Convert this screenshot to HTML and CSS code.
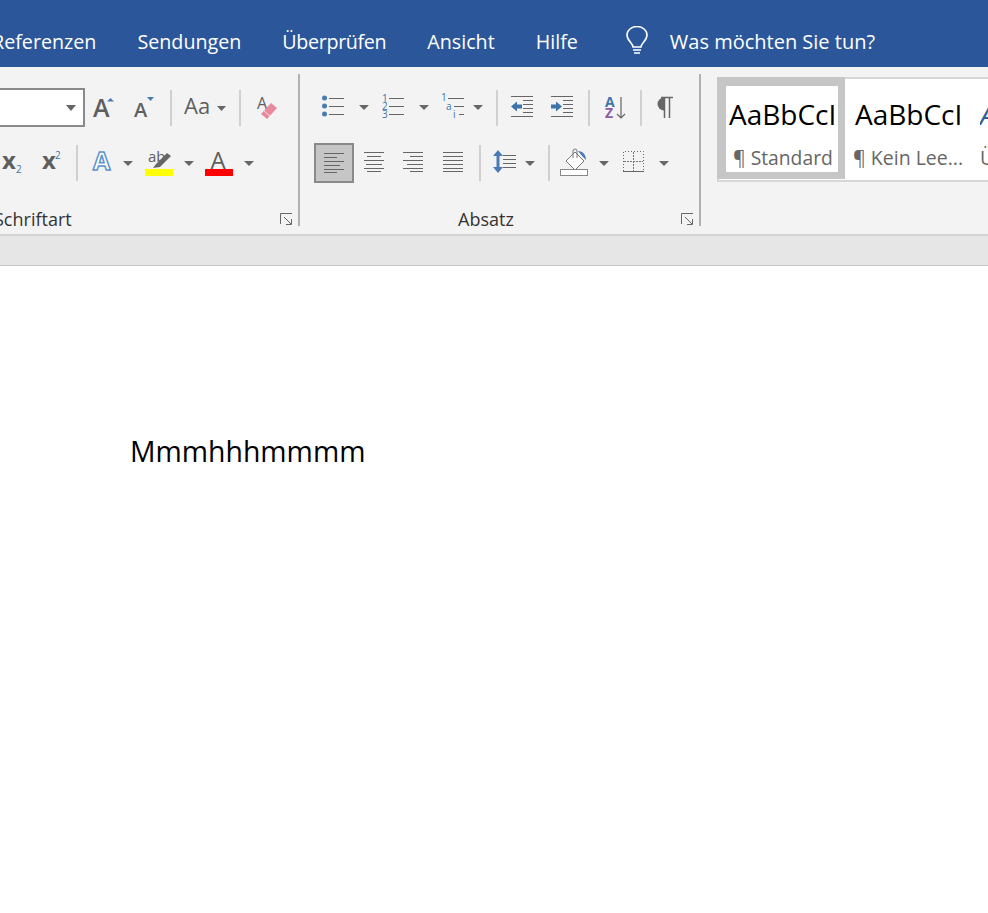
FILE: index.html
```html
<!DOCTYPE html>
<html lang="de">
<head>
    <meta charset="UTF-8">
    <meta name="viewport" content="width=device-width, initial-scale=1.0">
    <title>Dokument - Word</title>
    <link rel="stylesheet" href="styles.css">
</head>
<body>
    <div class="titlebar">
        <span class="tab tab-first">Referenzen</span>
        <span class="tab">Sendungen</span>
        <span class="tab tab-tight">Überprüfen</span>
        <span class="tab">Ansicht</span>
        <span class="tab">Hilfe</span>
        <svg class="bulb" width="24" height="30" viewBox="0 0 24 30" fill="none" stroke="#fff" stroke-width="1.6">
            <path d="M8 21c0-4-6-6-6-12a10 8.500 0 0 1 20 0c0 6-6 8-6 12z"/>
            <path d="M8 24h8M9 27h6"/>
        </svg>
        <span class="tell">Was möchten Sie tun?</span>
    </div>

    <div class="ribbon">
        <div class="group group-font">
            <div class="tools row-one-font">
                <div class="combo"><svg width="10" height="6"><path d="M0 0h10L5 6z" fill="#666"/></svg></div>
                <svg width="40" height="40"><text x="8" y="30" class="ic-letter big">A</text><path d="M22 14.500l3.500-3.500 3.500 3.500z" fill="#4a7ab5"/></svg>
                <svg width="40" height="40"><text x="9" y="30" class="ic-letter mid">A</text><path d="M22 10h7l-3.500 4z" fill="#4a7ab5"/></svg>
                <div class="sep sep-a"></div>
                <svg width="56" height="40"><text x="7" y="27" class="ic-letter aa">Aa</text><path d="M40 19h9l-4.500 5z" fill="#666"/></svg>
                <div class="sep sep-b"></div>
                <svg width="40" height="40">
                    <text x="10" y="22" class="ic-letter small">A</text>
                    <path d="M14 27L24 16l6 5-10 11z" fill="#e8899c"/>
                    <path d="M17 24l6 5" stroke="#f8dfe4"/>
                </svg>
            </div>
            <div class="tools row-two-font">
                <svg width="40" height="40"><text x="10" y="27" class="ic-letter script">x</text><text x="24" y="31" class="ic-sub">2</text></svg>
                <svg width="40" height="40"><text x="10" y="27" class="ic-letter script">x</text><text x="23" y="17" class="ic-sub">2</text></svg>
                <div class="sep sep-c"></div>
                <svg width="40" height="40"><text x="11" y="28" class="ic-effect">A</text></svg>
                <svg width="12" height="40"><path d="M1 19h10l-5 5z" fill="#666"/></svg>
                <svg width="50" height="40">
                    <text x="14" y="20" class="ic-letter ab">ab</text>
                    <path d="M19 26l3-4 11-11 4 3-11 11z" fill="#666"/>
                    <rect x="11" y="27" width="28" height="7" fill="#ffff00"/>
                </svg>
                <svg width="10" height="40"><path d="M0 19h10l-5 5z" fill="#666"/></svg>
                <svg width="50" height="40">
                    <text x="16.500" y="27" class="ic-letter color">A</text>
                    <rect x="11" y="27" width="28" height="7" fill="#ff0000"/>
                </svg>
                <svg width="10" height="40"><path d="M0 19h10l-5 5z" fill="#666"/></svg>
            </div>
            <div class="group-label">
                <span class="label-font">Schriftart</span>
                <svg class="launcher" width="13" height="13" fill="none" stroke="#666"><path d="M.5 11V.5H12M4 4l7 7M6 11.500h5.500V6"/></svg>
            </div>
        </div>

        <div class="group group-para">
            <div class="tools">
                <svg width="40" height="40" fill="none">
                    <g fill="#4a7ab5"><circle cx="10.500" cy="11" r="2.500"/><circle cx="10.500" cy="19" r="2.500"/><circle cx="10.500" cy="27" r="2.500"/></g>
                    <path d="M15 11.500h15M15 19.500h15M15 27.500h15" stroke="#666"/>
                </svg>
                <svg width="20" height="40"><path d="M5 18h10l-5 5z" fill="#666"/></svg>
                <svg width="40" height="40" fill="none">
                    <text x="8" y="15" class="ic-num">1</text><text x="8" y="23" class="ic-num">2</text><text x="8" y="31" class="ic-num">3</text>
                    <path d="M15 11.500h15M15 19.500h15M15 27.500h15" stroke="#666"/>
                </svg>
                <svg width="20" height="40"><path d="M5 18h10l-5 5z" fill="#666"/></svg>
                <svg width="36" height="40" fill="none">
                    <text x="7" y="14" class="ic-num">1</text><text x="12" y="23" class="ic-num">a</text><text x="19" y="31" class="ic-num">i</text>
                    <path d="M14 11.500h16M20 19.500h10M25 27.500h5" stroke="#666"/>
                </svg>
                <svg width="17" height="40"><path d="M3 18h10l-5 5z" fill="#666"/></svg>
                <div class="sep sep-d"></div>
                <svg width="40" height="40" fill="none">
                    <path d="M9 9.500h22M21 13.500h10M21 17.500h10M21 21.500h10M21 25.500h10M9 29.500h22" stroke="#666"/>
                    <path d="M9 19.500l6-5v3h5v4h-5v3z" fill="#3f74ab"/>
                </svg>
                <svg width="40" height="40" fill="none">
                    <path d="M9 9.500h22M21 13.500h10M21 17.500h10M21 21.500h10M21 25.500h10M9 29.500h22" stroke="#666"/>
                    <path d="M20 19.500l-6-5v3H9v4h5v3z" fill="#3f74ab"/>
                </svg>
                <div class="sep sep-e"></div>
                <svg width="42" height="40" fill="none">
                    <text x="11" y="20" class="ic-sort sort-a">A</text>
                    <text x="11" y="31" class="ic-sort sort-z">Z</text>
                    <path d="M27 10v21M23 27l4 4 4-4" stroke="#666" stroke-width="1.200"/>
                </svg>
                <div class="sep sep-f"></div>
                <svg width="40" height="40" fill="none">
                    <path d="M18 10.500a6.500 6.500 0 0 0 0 13z" fill="#666"/>
                    <path d="M15 10.500h12M18.500 10v21M23.500 10v21" stroke="#666" stroke-width="1.500"/>
                </svg>
            </div>
            <div class="tools">
                <div class="active-btn">
                    <svg width="20" height="22" fill="none" stroke="#666"><path d="M0 1.500h20M0 5.500h13M0 9.500h20M0 13.500h16M0 17.500h20M0 20.500h13"/></svg>
                </div>
                <svg width="39" height="40" fill="none" stroke="#666"><path d="M10 10.500h20M13 14.500h14M10 18.500h20M12 22.500h16M10 26.500h20M13 29.500h14"/></svg>
                <svg width="40" height="40" fill="none" stroke="#666"><path d="M10 10.500h20M17 14.500h13M10 18.500h20M14 22.500h16M10 26.500h20M17 29.500h13"/></svg>
                <svg width="40" height="40" fill="none" stroke="#666"><path d="M10 10.500h20M10 14.500h20M10 18.500h20M10 22.500h20M10 26.500h20M10 29.500h20"/></svg>
                <div class="sep sep-g"></div>
                <svg width="40" height="40" fill="none">
                    <path d="M13 8l-5 6h10zM13 31l-5-6h10z" fill="#4a7ab5"/>
                    <path d="M13 13v13" stroke="#4a7ab5" stroke-width="3"/>
                    <path d="M18 13.500h13M18 17.500h13M18 21.500h13M18 25.500h13" stroke="#666"/>
                </svg>
                <svg width="10" height="40"><path d="M0 19h10l-5 5z" fill="#666"/></svg>
                <div class="sep sep-h"></div>
                <svg width="44" height="40" fill="none">
                    <path d="M23 10l9 9-9 9-9-9z" stroke="#777" fill="#fff"/>
                    <path d="M21 16V9a2 2 0 0 1 4 0v7" stroke="#777"/>
                    <path d="M26 9c5 0 8 4 8 9l-3-3z" fill="#4a7ab5"/>
                    <rect x="8.500" y="27.500" width="27" height="6" stroke="#888" fill="#fff"/>
                </svg>
                <svg width="16" height="40"><path d="M3 19h10l-5 5z" fill="#666"/></svg>
                <svg width="44" height="40" fill="none">
                    <path d="M11.500 29V9.500h20V29" stroke="#666" stroke-dasharray="1 2"/>
                    <path d="M21.500 10v19M12 19.500h19" stroke="#777" stroke-dasharray="2 1"/>
                    <path d="M11 29.500h21" stroke="#666"/>
                </svg>
                <svg width="16" height="40"><path d="M3 19h10l-5 5z" fill="#666"/></svg>
            </div>
            <div class="group-label">
                <span class="label-para">Absatz</span>
                <svg class="launcher" width="13" height="13" fill="none" stroke="#666"><path d="M.5 11V.5H12M4 4l7 7M6 11.500h5.500V6"/></svg>
            </div>
        </div>

        <div class="group-styles">
            <div class="gallery">
                <div class="style-item style-active">
                    <div class="style-sample">AaBbCcI</div>
                    <div class="style-name">¶ Standard</div>
                </div>
                <div class="style-item style-second">
                    <div class="style-sample">AaBbCcI</div>
                    <div class="style-name">¶ Kein Lee...</div>
                </div>
                <div class="style-item style-third">
                    <div class="style-sample heading">A</div>
                    <div class="style-name">Ü</div>
                </div>
            </div>
        </div>
    </div>

    <div class="ruler"></div>

    <div class="page">
        <p class="doc-text">Mmmhhhmmmm</p>
    </div>
</body>
</html>
```

FILE: styles.css
```css
* {
    margin: 0;
    padding: 0;
    box-sizing: border-box;
}

html, body {
    overflow: hidden;
}

body {
    width: 988px;
    height: 913px;
    background: #fff;
    font-family: 'Open Sans', sans-serif;
}

svg {
    display: block;
    flex: none;
}

.titlebar {
    height: 67px;
    background: #2b579a;
    color: #fff;
    display: flex;
    align-items: center;
    padding-top: 15px;
    font-size: 19.7px;
    white-space: nowrap;
}

.tab {
    margin-right: 41px;
}

.tab-first {
    margin-left: -8px;
}

.tab-tight {
    letter-spacing: -0.35px;
}

.bulb {
    margin-left: 6px;
}

.tell {
    margin-left: 21px;
    font-size: 20px;
}

.ribbon {
    height: 169px;
    background: #f3f3f3;
    border-bottom: 2px solid #d4d4d4;
    display: flex;
    align-items: flex-start;
    overflow: hidden;
}

.group {
    height: 152px;
    margin-top: 7px;
    padding-top: 13px;
    border-right: 2px solid #b1b1b1;
    display: flex;
    flex-direction: column;
    gap: 15px;
}

.group-font {
    width: 300px;
}

.group-para {
    width: 401px;
    padding-left: 14px;
}

.tools {
    display: flex;
    align-items: center;
    height: 40px;
}

.row-one-font {
    margin-left: -10px;
}

.row-two-font {
    margin-left: -8px;
}

.combo {
    width: 95px;
    height: 39px;
    flex: none;
    margin-top: 1px;
    background: #fff;
    border: 2px solid #8a8a8a;
    display: flex;
    align-items: center;
    justify-content: flex-end;
    padding-right: 7px;
}

.sep {
    width: 2px;
    height: 36px;
    flex: none;
    margin-top: 2px;
    background: #d0d0d0;
}

.sep-a {
    margin-left: 5px;
    margin-right: 5px;
}

.sep-b {
    margin-left: 6px;
    margin-right: 6px;
}

.sep-c, .sep-f {
    margin-left: 4px;
    margin-right: 4px;
}

.sep-d {
    margin-left: 9px;
    margin-right: 4px;
}

.sep-e, .sep-g {
    margin-left: 6px;
    margin-right: 4px;
}

.sep-h {
    margin-left: 13px;
    margin-right: 2px;
}

.active-btn {
    width: 40px;
    height: 40px;
    flex: none;
    margin-top: 2px;
    background: #c6c6c6;
    border: 2px solid #8a8a8a;
    display: flex;
    align-items: center;
    justify-content: center;
}

.ic-letter {
    font-family: 'Open Sans', sans-serif;
    font-weight: 600;
    fill: #5f5f5f;
}

.big {
    font-size: 25px;
}

.mid {
    font-size: 20px;
}

.aa {
    font-size: 22px;
    font-weight: 400;
}

.small {
    font-size: 16px;
    font-weight: 400;
}

.script {
    font-size: 24px;
    font-weight: 700;
}

.ab {
    font-size: 15px;
    font-weight: 400;
}

.color {
    font-size: 24px;
    font-weight: 400;
}

.ic-sub {
    font-family: 'Open Sans', sans-serif;
    font-size: 10px;
    fill: #3f74ab;
}

.ic-num {
    font-family: 'Open Sans', sans-serif;
    font-size: 10px;
    fill: #3f74ab;
}

.ic-effect {
    font-family: 'Open Sans', sans-serif;
    font-size: 25px;
    font-weight: 700;
    fill: #fff;
    stroke: #5b93d0;
    stroke-width: 1.5px;
}

.ic-sort {
    font-family: 'Open Sans', sans-serif;
    font-size: 14px;
    font-weight: 700;
}

.sort-a {
    fill: #3f74ab;
}

.sort-z {
    fill: #8e5ba6;
}

.group-label {
    display: flex;
    justify-content: space-between;
    align-items: center;
    height: 24px;
    margin-top: 10px;
    font-size: 18px;
    color: #333;
    white-space: nowrap;
}

.label-font {
    margin-left: -6px;
}

.label-para {
    margin-left: 144px;
}

.launcher {
    margin-right: 5px;
}

.group-styles {
    flex: 1;
    min-width: 0;
    padding: 10px 0 0 16px;
}

.gallery {
    height: 105px;
    display: flex;
    background: #fff;
    border: 2px solid #d6d6d6;
    border-right: none;
}

.style-item {
    height: 100px;
    flex: none;
    padding-top: 7px;
    overflow: hidden;
    white-space: nowrap;
}

.style-active {
    width: 128px;
    height: 102px;
    margin: -2px 0 0 -2px;
    padding: 0;
    border: solid #c6c6c6;
    border-width: 9px 7px 7px 9px;
}

.style-second {
    width: 135px;
    padding-left: 7px;
}

.style-third {
    width: 60px;
}

.style-sample {
    font-size: 28px;
    color: #000;
    height: 56px;
    line-height: 56px;
    padding-left: 3px;
}

.style-name {
    font-size: 19.3px;
    color: #666;
    line-height: 32px;
    padding-left: 7px;
}

.style-second .style-name {
    font-size: 19.500px;
    padding-left: 1px;
}

.style-third .style-name {
    padding-left: 0;
}

.heading {
    color: #2f5f97;
    font-style: italic;
    padding-left: 0;
}

.ruler {
    height: 30px;
    background: #e6e6e6;
    border-bottom: 1px solid #c6c6c6;
}

.page {
    padding: 165px 0 0 130px;
}

.doc-text {
    font-size: 28.4px;
    line-height: 40px;
    color: #000;
}
```
